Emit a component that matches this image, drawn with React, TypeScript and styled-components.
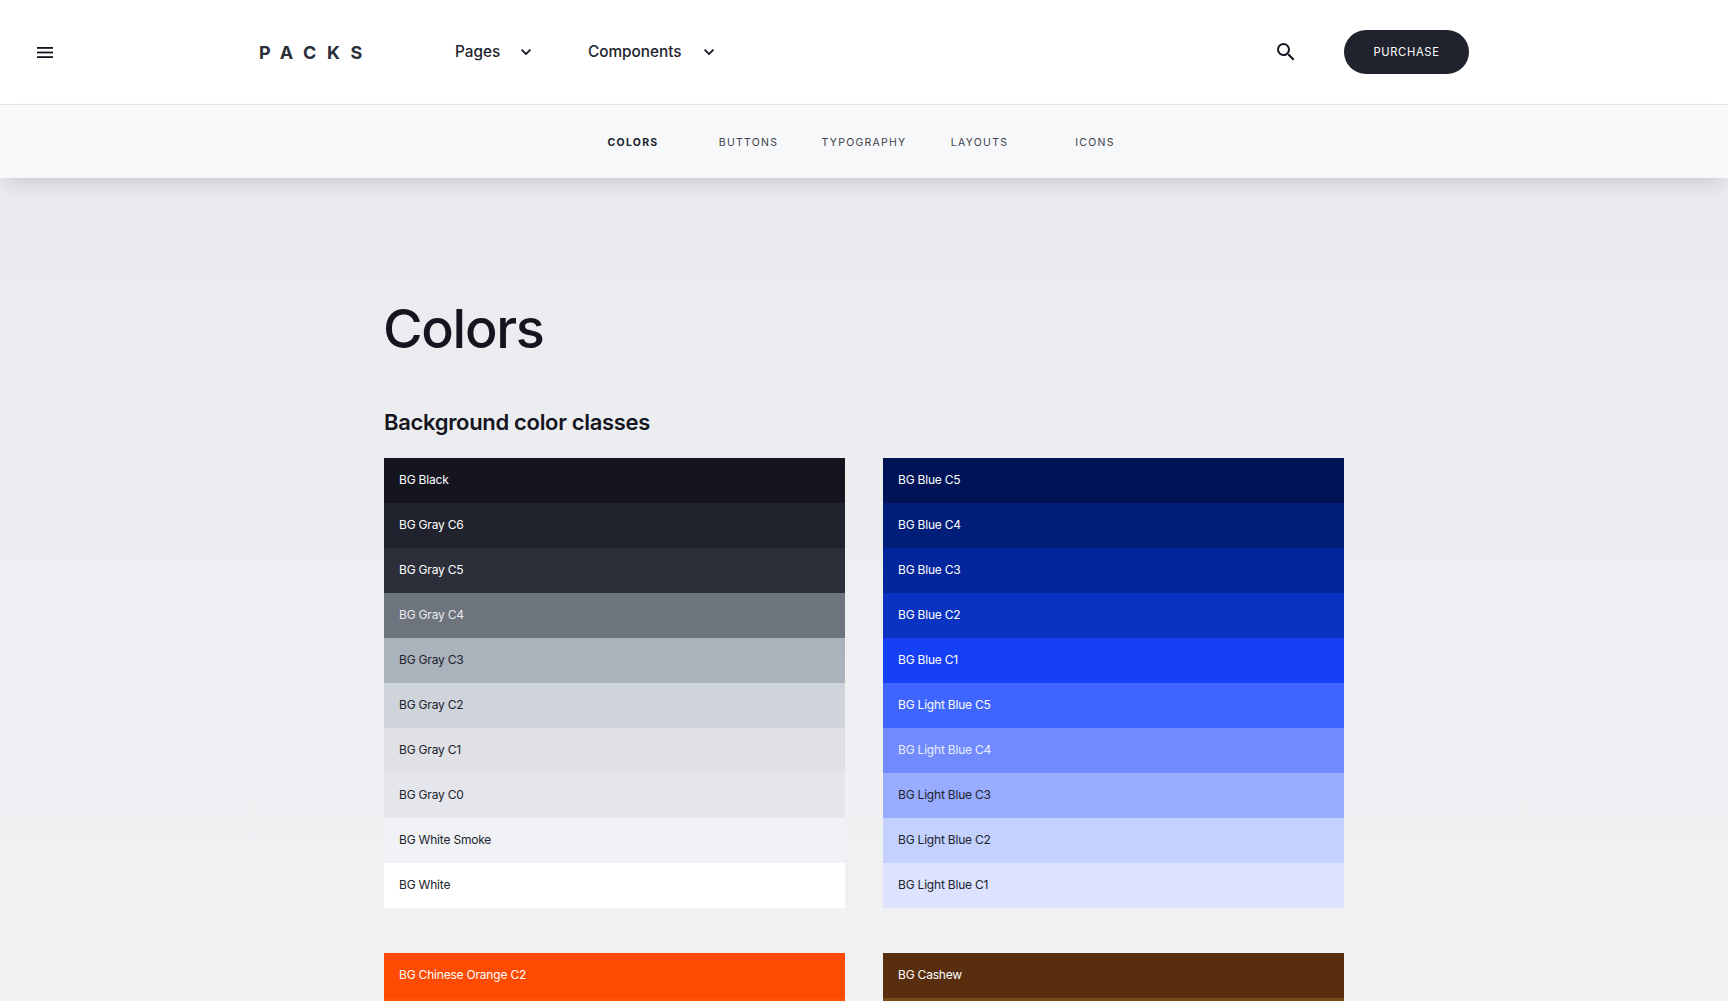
import React from "react";
import styled, { createGlobalStyle } from "styled-components";

const GlobalStyle = createGlobalStyle`
  html, body { margin: 0; padding: 0; }
  body {
    font-family: Inter, "Noto Sans", sans-serif;
    color: #14151f;
    background: #eef0f2;
    overflow: hidden;
  }
  * { box-sizing: border-box; }
`;

const Page = styled.div`
  width: 1728px;
  height: 1001px;
  overflow: hidden;
  background: linear-gradient(180deg, #eaebee 178px, #f1f2f4 100%);
`;

const TopBar = styled.header`
  height: 105px;
  background: #fff;
  border-bottom: 1px solid #e2e4e8;
  display: flex;
  align-items: center;
  padding: 0 259px 0 37px;
`;

const MenuButton = styled.span`
  display: flex;
  width: 16px;
  margin-right: 206px;
`;

const Logo = styled.div`
  font-size: 18px;
  font-weight: 700;
  letter-spacing: 0.59em;
  color: #2c2f39;
  width: 196px;
  white-space: nowrap;
`;

const NavItem = styled.div<{ $width: number }>`
  display: flex;
  align-items: center;
  justify-content: space-between;
  width: ${(p) => p.$width}px;
  font-size: 15.3px;
  font-weight: 500;
  color: #20232d;
  margin-right: 55px;
  margin-top: -1px;
  white-space: nowrap;
`;

const RightSide = styled.div`
  margin-left: auto;
  display: flex;
  align-items: center;
  gap: 46px;
`;

const SearchIcon = styled.svg`
  width: 24px;
  height: 24px;
  display: block;
`;

const Purchase = styled.div`
  width: 125px;
  height: 44px;
  border-radius: 22px;
  background: #20232d;
  color: #fff;
  display: flex;
  align-items: center;
  justify-content: center;
  font-size: 11.2px;
  font-weight: 400;
  letter-spacing: 0.06em;
`;

const SubBar = styled.nav`
  height: 73px;
  padding-top: 2px;
  background: #f7f8fa;
  display: flex;
  justify-content: center;
  align-items: center;
  box-shadow: 0 10px 20px -6px rgba(20, 21, 31, 0.16);
  position: relative;
`;

const SubLink = styled.div<{ $active?: boolean }>`
  width: 115.5px;
  text-align: center;
  font-size: 10.5px;
  font-weight: ${(p) => (p.$active ? 700 : 400)};
  letter-spacing: 0.12em;
  color: ${(p) => (p.$active ? "#20232d" : "#3d4049")};
`;

const Main = styled.main`
  width: 960px;
  margin: 0 auto;
  padding-top: 119px;
`;

const Title = styled.h1`
  margin: 0 0 0 -1px;
  font-size: 54px;
  line-height: 64px;
  font-weight: 500;
  letter-spacing: -1.3px;
  color: #14151f;
`;

const Subtitle = styled.h2`
  margin: 45px 0 20px;
  font-size: 22px;
  line-height: 32px;
  font-weight: 600;
  letter-spacing: -0.32px;
  color: #14151f;
`;

const Grid = styled.div`
  display: grid;
  grid-template-columns: 461px 461px;
  column-gap: 38px;
  row-gap: 45px;
`;

const Stack = styled.div`
  display: flex;
  flex-direction: column;
`;

const Swatch = styled.div<{ $bg: string; $fg: string }>`
  height: 45px;
  padding: 0 0 2px 15px;
  display: flex;
  align-items: center;
  background: ${(p) => p.$bg};
  color: ${(p) => p.$fg};
  font-size: 12px;
  font-weight: 400;
  letter-spacing: -0.2px;
`;

type Item = [string, string, string];
const W = "#ffffff";
const D = "#20232d";

const groups: Item[][] = [
  [
    ["BG Black", "#14151f", W],
    ["BG Gray C6", "#20232d", W],
    ["BG Gray C5", "#2c2f39", W],
    ["BG Gray C4", "#6d747e", "#e9eaed"],
    ["BG Gray C3", "#aab2bc", D],
    ["BG Gray C2", "#cfd3da", D],
    ["BG Gray C1", "#dfe1e5", D],
    ["BG Gray C0", "#e4e6eb", D],
    ["BG White Smoke", "#f1f2f5", D],
    ["BG White", "#ffffff", D],
  ],
  [
    ["BG Blue C5", "#001356", W],
    ["BG Blue C4", "#011e78", W],
    ["BG Blue C3", "#03269c", W],
    ["BG Blue C2", "#0b33c2", W],
    ["BG Blue C1", "#1540f5", W],
    ["BG Light Blue C5", "#3e65ff", W],
    ["BG Light Blue C4", "#718bff", "#e9eefe"],
    ["BG Light Blue C3", "#98adff", D],
    ["BG Light Blue C2", "#c4d0fe", D],
    ["BG Light Blue C1", "#dde2fe", D],
  ],
  [
    ["BG Chinese Orange C2", "#ff4a01", "#fff"],
    ["", "#ff5500", "#fff"],
  ],
  [
    ["BG Cashew", "#582e0f", "#fff"],
    ["", "#7a4a14", "#fff"],
  ],
];

const subLinks = ["COLORS", "BUTTONS", "TYPOGRAPHY", "LAYOUTS", "ICONS"];

const Chevron = () => (
  <svg width="14" height="14" viewBox="0 0 24 24" fill="none" stroke="#14151f" strokeWidth="3.2">
    <path d="M4.5 8l7.5 7.5L19.5 8" />
  </svg>
);

export default function App() {
  return (
    <Page>
      <GlobalStyle />
      <TopBar>
        <MenuButton>
          <svg width="16" height="11" viewBox="0 0 16 11" fill="#14151f">
            <rect y="0" width="16" height="1.8" />
            <rect y="4.6" width="16" height="1.8" />
            <rect y="9.2" width="16" height="1.8" />
          </svg>
        </MenuButton>
        <Logo>PACKS</Logo>
        <NavItem $width={78}>
          Pages <Chevron />
        </NavItem>
        <NavItem $width={128}>
          Components <Chevron />
        </NavItem>
        <RightSide>
          <SearchIcon viewBox="0 0 24 24" fill="#14151f">
            <path d="M15.5 14h-.79l-.28-.27A6.47 6.47 0 0 0 16 9.5 6.5 6.5 0 1 0 9.5 16c1.61 0 3.09-.59 4.23-1.57l.27.28v.79l5 4.99L20.49 19l-4.99-5zm-6 0C7.01 14 5 11.99 5 9.5S7.01 5 9.5 5 14 7.01 14 9.5 11.99 14 9.5 14z" />
          </SearchIcon>
          <Purchase>PURCHASE</Purchase>
        </RightSide>
      </TopBar>
      <SubBar>
        {subLinks.map((l, i) => (
          <SubLink key={l} $active={i === 0}>
            {l}
          </SubLink>
        ))}
      </SubBar>
      <Main>
        <Title>Colors</Title>
        <Subtitle>Background color classes</Subtitle>
        <Grid>
          {groups.map((g, i) => (
            <Stack key={i}>
              {g.map(([name, bg, fg]) => (
                <Swatch key={bg} $bg={bg} $fg={fg}>
                  {name}
                </Swatch>
              ))}
            </Stack>
          ))}
        </Grid>
      </Main>
    </Page>
  );
}
